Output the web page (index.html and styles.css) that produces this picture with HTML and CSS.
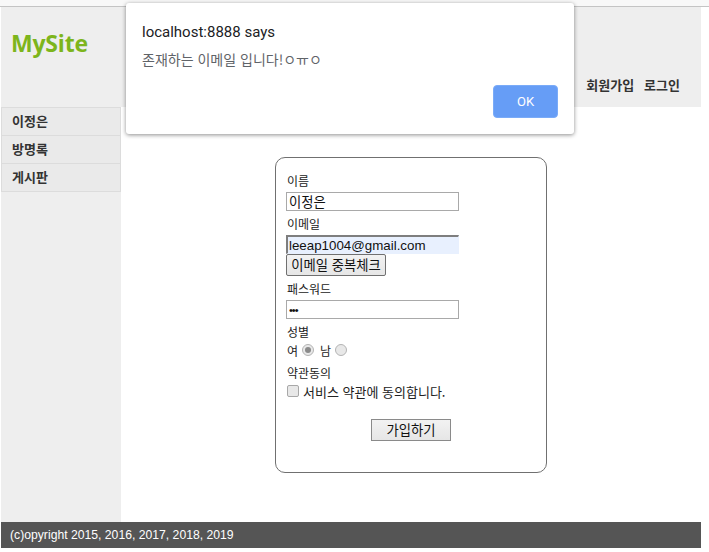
FILE: index.html
```html
<!DOCTYPE html>
<html lang="ko">
<head>
<meta charset="utf-8">
<title>MySite</title>
<link rel="stylesheet" href="styles.css">
</head>
<body>
<div class="topstrip"></div>
<div class="page">
  <header class="header">
    <h1 class="logo">MySite</h1>
    <nav class="topnav">
      <a class="topnav-link">회원가입</a>
      <a class="topnav-link">로그인</a>
    </nav>
  </header>
  <div class="body">
    <aside class="side">
      <ul class="side-menu">
        <li class="side-item">이정은</li>
        <li class="side-item">방명록</li>
        <li class="side-item">게시판</li>
      </ul>
    </aside>
    <main class="content">
      <form class="joinbox">
        <label class="lbl">이름</label>
        <input class="field" type="text" value="이정은">
        <label class="lbl">이메일</label>
        <input class="field field-auto" type="text" value="leeap1004@gmail.com">
        <button type="button" class="btn btn-check">이메일 중복체크</button>
        <label class="lbl">패스워드</label>
        <input class="field field-pw" type="password" value="abc">
        <label class="lbl lbl-tight">성별</label>
        <div class="radio-row">
          <span>여</span><span class="radio radio-on"></span>
          <span>남</span><span class="radio"></span>
        </div>
        <label class="lbl lbl-tight">약관동의</label>
        <div class="check-row">
          <span class="check"></span><span class="check-text">서비스 약관에 동의합니다.</span>
        </div>
        <div class="submit-row">
          <button type="button" class="btn btn-submit">가입하기</button>
        </div>
      </form>
    </main>
  </div>
  <footer class="footer">(c)opyright 2015, 2016, 2017, 2018, 2019</footer>
</div>
<div class="dialog">
  <div class="dialog-title">localhost:8888 says</div>
  <div class="dialog-msg">존재하는 이메일 입니다!ㅇㅠㅇ</div>
  <div class="dialog-actions"><button type="button" class="dialog-ok">OK</button></div>
</div>
</body>
</html>
```
FILE: styles.css
```css
* { box-sizing: border-box; }
html, body { margin: 0; padding: 0; background: #fff; }
body {
  width: 709px;
  height: 552px;
  overflow: hidden;
  font-family: "Noto Sans CJK KR", "Noto Sans", sans-serif;
  color: #222;
}
.topstrip {
  height: 7px;
  background: #f8f8f8;
  border-bottom: 1px solid #c4c4c4;
}
.page {
  width: 700px;
  margin-left: 1px;
  display: flex;
  flex-direction: column;
}
.header {
  height: 100px;
  background: #eeeeee;
  display: flex;
  justify-content: space-between;
  align-items: flex-start;
  padding: 0 21px 0 10px;
}
.logo {
  margin: 22px 0 0 0;
  font-family: "Open Sans", "Noto Sans", sans-serif;
  font-weight: 700;
  font-size: 23px;
  line-height: 28px;
  color: #7db51c;
  letter-spacing: -0.2px;
}
.topnav {
  align-self: flex-end;
  margin-bottom: 13px;
  display: flex;
  gap: 10px;
}
.topnav-link {
  font-size: 13px;
  font-weight: 700;
  line-height: 18px;
  color: #333;
}
.body {
  display: flex;
  height: 415px;
}
.side {
  width: 120px;
  background: #eeeeee;
}
.side-menu {
  list-style: none;
  margin: 0;
  padding: 0;
}
.side-item {
  height: 28px;
  border: 1px solid #dcdcdc;
  border-top: none;
  background: #eaeaea;
  font-size: 13px;
  font-weight: 700;
  color: #333;
  line-height: 26px;
  padding-left: 10px;
}
.side-item:first-child {
  border-top: 1px solid #dcdcdc;
  height: 29px;
}
.content {
  flex: 1;
  display: flex;
  justify-content: center;
  align-items: flex-start;
  padding-top: 50px;
}
.joinbox {
  width: 272px;
  border: 1px solid #707070;
  border-radius: 10px;
  padding: 14px 10px 31px 10px;
  display: flex;
  flex-direction: column;
  align-items: flex-start;
}
.lbl {
  font-size: 12px;
  line-height: 18px;
  height: 18px;
  margin-bottom: 2px;
  color: #222;
  padding-left: 1px;
}
.lbl-tight { margin-bottom: 0; }
.field {
  width: 173px;
  height: 19px;
  border: 1px solid #a9a9a9;
  padding: 0 2px;
  margin: 0 0 4px 0;
  font-family: "Noto Sans CJK KR", sans-serif;
  font-size: 13.33px;
  line-height: 17px;
  color: #111;
  background: #fff;
  outline: none;
}
.field-auto {
  background: #e8f0fe;
  font-family: "Liberation Sans", Arial, sans-serif;
  border-color: #7e7e7e #e8f0fe #e8f0fe #7e7e7e;
  border-width: 2px 1px 1px 2px;
  margin-bottom: 0;
  padding-left: 1px;
}
.field-pw {
  font-family: "Liberation Sans", Arial, sans-serif;
  font-size: 11px;
  letter-spacing: -1px;
}
.btn {
  font-family: "Noto Sans CJK KR", sans-serif;
  font-size: 13.33px;
  color: #111;
  background: linear-gradient(#f2f2f2, #e6e6e6);
  border: 1px solid #8a8a8a;
  border-radius: 0;
  padding: 0 2px;
  line-height: 18px;
}
.btn-check {
  width: 100px;
  height: 22px;
  margin-bottom: 4px;
  border-color: #707070;
  border-radius: 2px;
}
.radio-row, .check-row {
  display: flex;
  align-items: center;
  height: 18px;
  font-size: 12px;
  gap: 4px;
  padding-left: 1px;
}
.radio-row { margin-bottom: 5px; }
.check-row { margin-bottom: 3px; }
.radio {
  width: 12px;
  height: 12px;
  border-radius: 50%;
  border: 1px solid #b4b4b4;
  background: #e8e8e8;
  display: inline-block;
  position: relative;
  margin-right: 2px;
}
.radio-on::after {
  content: "";
  position: absolute;
  left: 2px;
  top: 2px;
  width: 6px;
  height: 6px;
  border-radius: 50%;
  background: #8a8a8a;
}
.check-text { font-size: 13px; }
.check {
  width: 12px;
  height: 12px;
  border: 1px solid #a8a8a8;
  border-radius: 2px;
  background: #e8e8e8;
  display: inline-block;
}
.submit-row {
  width: 100%;
  display: flex;
  justify-content: center;
  margin-top: 16px;
}
.btn-submit {
  width: 80px;
  height: 22px;
}
.footer {
  height: 26px;
  background: #555555;
  color: #fff;
  font-family: "Liberation Sans", Arial, sans-serif;
  font-size: 12.2px;
  line-height: 27px;
  padding-left: 9px;
}
.dialog {
  position: absolute;
  left: 126px;
  top: 3px;
  width: 448px;
  height: 131px;
  background: #fff;
  border-radius: 3px;
  box-shadow: 0 1px 4px rgba(0,0,0,0.45);
  padding: 20px 16px 0 16px;
  font-family: "Roboto", "Noto Sans CJK KR", sans-serif;
}
.dialog-title {
  font-size: 15px;
  line-height: 18px;
  color: #202124;
}
.dialog-msg {
  margin-top: 9px;
  font-family: "Noto Sans CJK KR", sans-serif;
  font-size: 14px;
  line-height: 18px;
  color: #5f6368;
}
.dialog-actions {
  display: flex;
  justify-content: flex-end;
  margin-top: 17px;
}
.dialog-ok {
  width: 65px;
  height: 33px;
  background: #669df6;
  color: #fff;
  border: 1px solid #7aabf8;
  border-radius: 4px;
  font-family: "Roboto", sans-serif;
  font-size: 13px;
}
```
